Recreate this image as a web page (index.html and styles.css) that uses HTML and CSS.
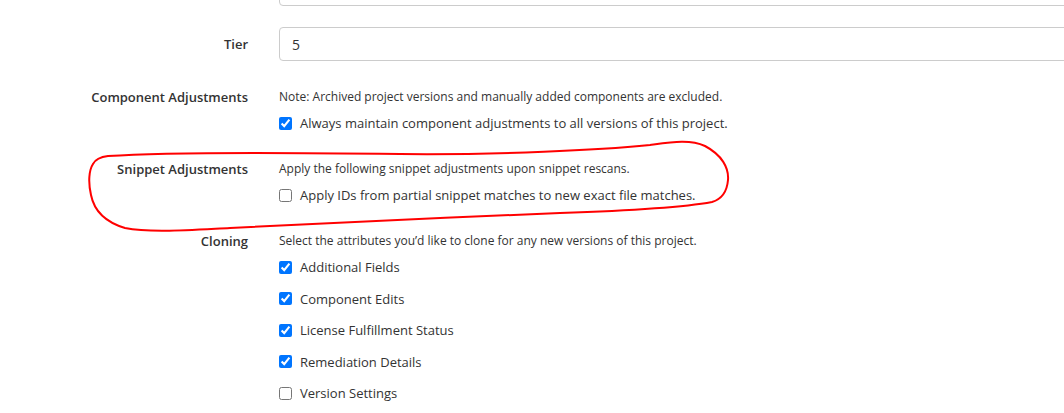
FILE: index.html
```html
<!DOCTYPE html>
<html>
<head>
<meta charset="utf-8">
<link rel="stylesheet" href="styles.css">
</head>
<body>
<div class="page">
  <form class="form">
    <div class="row row-input row-first">
      <div class="label"></div>
      <div class="content"><input class="text-input" type="text" value=""></div>
    </div>
    <div class="row row-input">
      <div class="label label-input">Tier</div>
      <div class="content"><input class="text-input" type="text" value="5"></div>
    </div>
    <div class="row">
      <div class="label">Component Adjustments</div>
      <div class="content">
        <div class="note">Note: Archived project versions and manually added components are excluded.</div>
        <label class="check"><input type="checkbox" checked><span>Always maintain component adjustments to all versions of this project.</span></label>
      </div>
    </div>
    <div class="row">
      <div class="label">Snippet Adjustments</div>
      <div class="content">
        <div class="note">Apply the following snippet adjustments upon snippet rescans.</div>
        <label class="check"><input type="checkbox"><span>Apply IDs from partial snippet matches to new exact file matches.</span></label>
      </div>
    </div>
    <div class="row">
      <div class="label">Cloning</div>
      <div class="content">
        <div class="note">Select the attributes you’d like to clone for any new versions of this project.</div>
        <div class="check-list">
          <label class="check"><input type="checkbox" checked><span>Additional Fields</span></label>
          <label class="check"><input type="checkbox" checked><span>Component Edits</span></label>
          <label class="check"><input type="checkbox" checked><span>License Fulfillment Status</span></label>
          <label class="check"><input type="checkbox" checked><span>Remediation Details</span></label>
          <label class="check"><input type="checkbox"><span>Version Settings</span></label>
        </div>
      </div>
    </div>
  </form>
  <svg class="annotation" width="1064" height="413" viewBox="0 0 1064 413" aria-hidden="true">
    <path d="M93,164 C95,160 100,157 108,156 C150,153 250,152 400,154 C500,155 600,150 650,145 C672,142 690,139 705,146 C722,155 729,168 728,180 C727,192 722,199 712,202 C680,208 620,211 560,213 C450,217 320,224 230,228 C190,230 150,233 125,228 C105,222 94,210 91,195 C88,182 89,170 93,164" fill="none" stroke="#f00" stroke-width="2" stroke-linecap="round" stroke-linejoin="round"/>
  </svg>
</div>
</body>
</html>
```

FILE: styles.css
```css
html, body {
  margin: 0;
  padding: 0;
  background: #fff;
  overflow: hidden;
}

.page {
  position: relative;
  width: 1064px;
  height: 413px;
  overflow: hidden;
  font-family: "Open Sans", "Noto Sans", Arial, sans-serif;
  color: #333;
}

.form {
  display: flex;
  flex-direction: column;
  gap: 26px;
  margin-top: -28px;
}

.row {
  display: grid;
  grid-template-columns: 248px 800px;
  column-gap: 31px;
  align-items: start;
}

.row-first {
  margin-bottom: -5px;
}

.row-input {
  align-items: center;
}

.label {
  text-align: right;
  font-size: 13px;
  font-weight: 600;
  line-height: 20px;
  color: #333;
}

.label-input {
  margin-top: -1px;
}

.content {
  display: flex;
  flex-direction: column;
}

.text-input {
  box-sizing: border-box;
  width: 800px;
  height: 34px;
  border: 1px solid #ccc;
  border-radius: 4px;
  padding: 0 12px;
  font-family: inherit;
  font-size: 14px;
  color: #333;
  background: #fff;
  outline: none;
}

.note {
  font-size: 12px;
  line-height: 20px;
  color: #333;
}

.check {
  display: flex;
  align-items: center;
  margin-top: 6px;
  font-size: 13px;
  line-height: 20px;
  color: #333;
}

.check input {
  width: 13px;
  height: 13px;
  margin: 0 8px 0 0;
  accent-color: #0075ff;
}

.check-list {
  display: flex;
  flex-direction: column;
}

.check-list .check + .check {
  margin-top: 11.5px;
}

.annotation {
  position: absolute;
  left: 0;
  top: 0;
  pointer-events: none;
}
```
